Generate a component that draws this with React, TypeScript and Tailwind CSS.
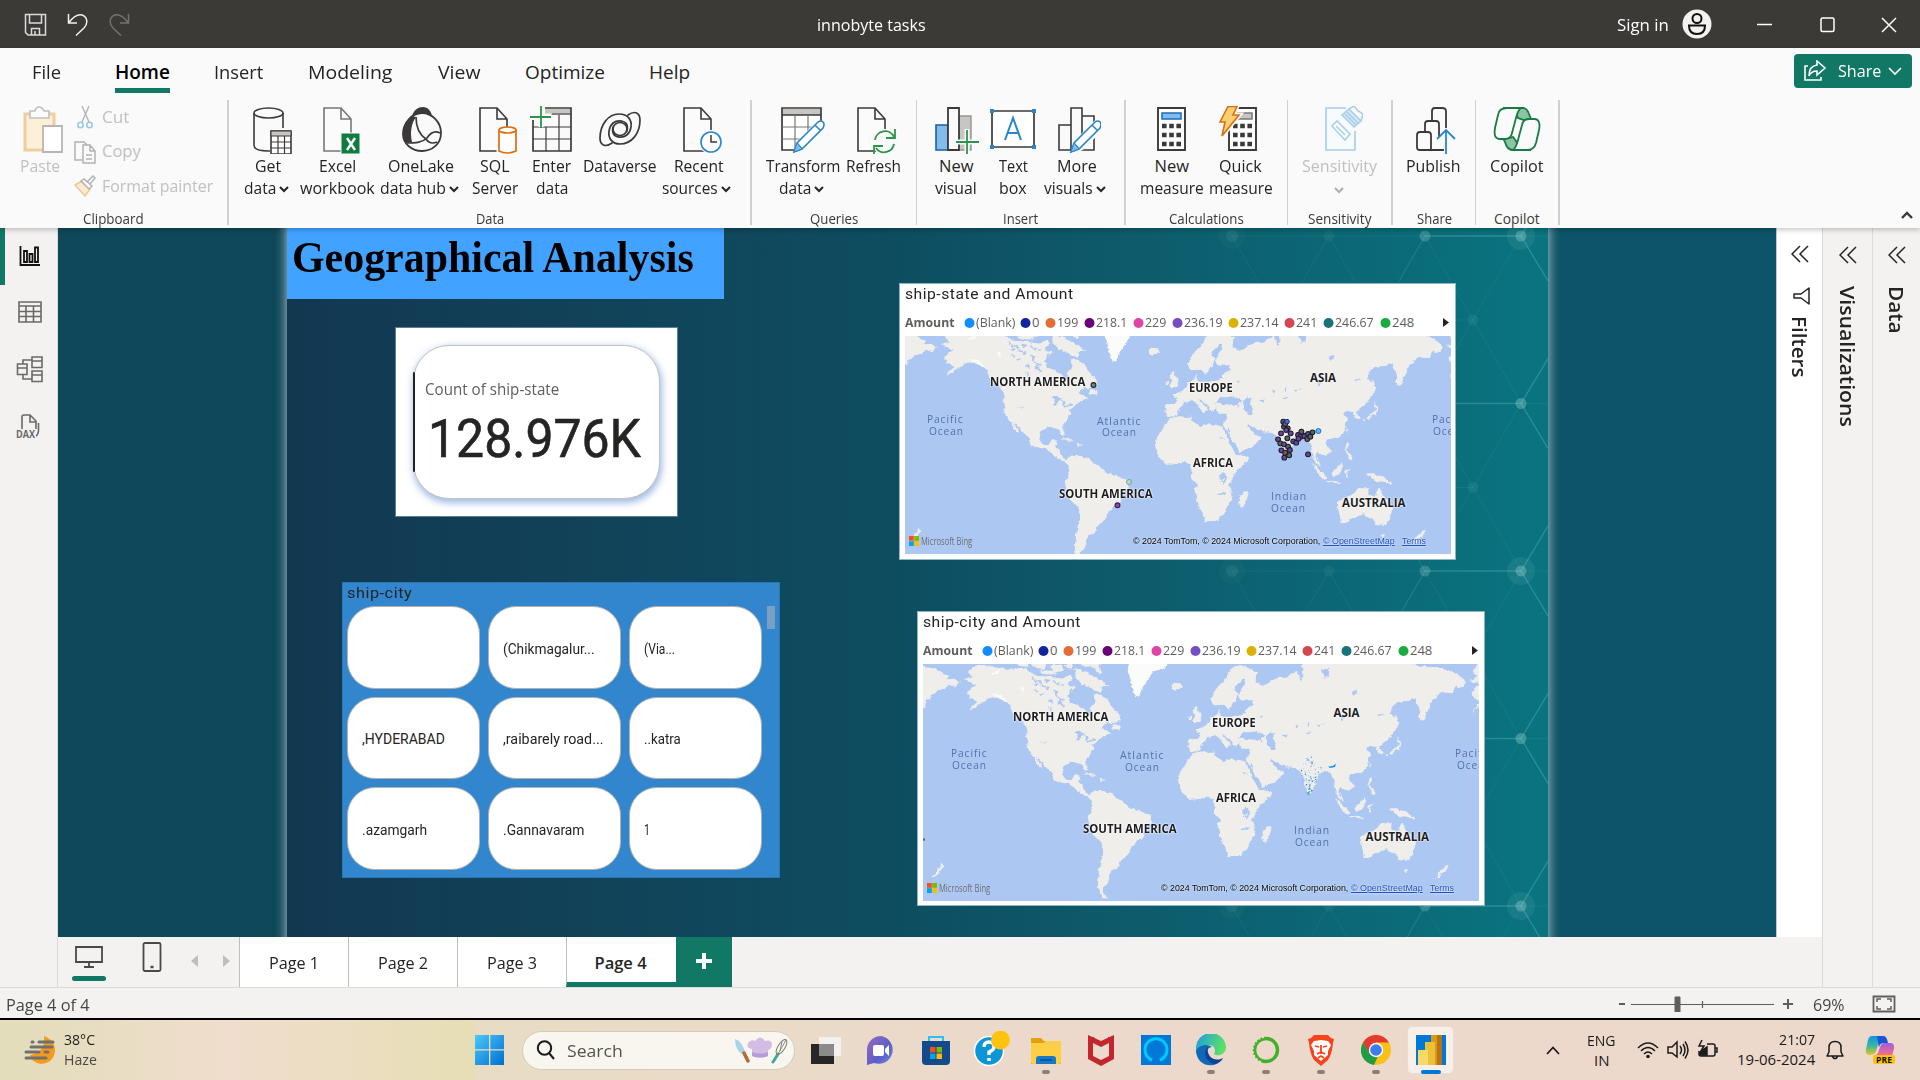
import { useLayoutEffect, useRef, useState, type ReactNode } from 'react';

/* Text squeezed or widened to an exact advance width */
function Fit({ w, children, className = '' }: { w: number; children: ReactNode; className?: string }) {
  const ref = useRef<HTMLSpanElement>(null);
  const [s, setS] = useState(1);
  useLayoutEffect(() => {
    if (ref.current) setS(w / ref.current.offsetWidth);
  }, [w]);
  return (
    <span className={`inline-block shrink-0 text-left whitespace-nowrap ${className}`} style={{ width: w }}>
      <span ref={ref} className="inline-block origin-left" style={{ transform: `scaleX(${s})` }}>
        {children}
      </span>
    </span>
  );
}

function Caret({ className = '' }: { className?: string }) {
  return (
    <svg width="10" height="8" viewBox="0 0 10 8" className={className}>
      <path d="M1 2l4 4 4-4" fill="none" stroke="currentColor" strokeWidth="2" />
    </svg>
  );
}

const K = '#3b3a39';
const Doc = ({ c = K }: { c?: string }) => (
  <path d="M1 1H18L28 12V44H1ZM18 1V12H28" fill="#fbfbfb" stroke={c} strokeWidth="1.6" />
);
const Pencil = () => (
  <g>
    <path d="M17 46L20 36 40 16 46 22 26 42Z" fill="#fafafa" stroke="#fafafa" strokeWidth="4" />
    <path d="M15 46L18 37 39 16Q42 14 44 16T44 22L23 43ZM18 37L23 43M36 19L41 24" fill="#fff" stroke="#2886ca" strokeWidth="1.6" />
    <path d="M15 46L18 37 23 43Z" fill="#83bbeb" stroke="#2886ca" />
  </g>
);

function Icon({ name }: { name: string }) {
  const p = { width: 48, height: 48, viewBox: '0 0 48 48', fill: 'none', className: 'shrink-0' };
  switch (name) {
    case 'get':
      return (
        <svg {...p} viewBox="-2 0 48 48">
          <path d="M8 7V39Q8 45 22 45H24M37 7V22" stroke={K} strokeWidth="1.6" />
          <ellipse cx="22.5" cy="7" rx="14.5" ry="5" stroke={K} strokeWidth="1.6" />
          <path d="M25 25H45V48H25Z" fill="#fff" stroke={K} strokeWidth="1.6" />
          <path d="M25 25H45V30H25Z" fill="#c8c6c4" stroke={K} strokeWidth="1" />
          <path d="M25 36H45M25 42H45M32 30V48M38.500 30V48" stroke={K} strokeWidth="1.2" />
        </svg>
      );
    case 'excel':
      return (
        <svg {...p}>
          <g transform="translate(9 1)"><Doc c="#797775" /></g>
          <path d="M27 27H46V48H27Z" fill="#107c41" stroke="#fafafa" strokeWidth="1" />
          <path d="M33 32L41 44M41 32L33 44" stroke="#fff" strokeWidth="2.4" />
        </svg>
      );
    case 'onelake':
      return (
        <svg {...p} viewBox="-1 0 48 48">
          <path d="M24 7C34 7 43 16 43 27C43 38 34 45 24 45C14 45 5 38 5 28C5 17 14 7 24 7Z" stroke={K} strokeWidth="1.8" />
          <path d="M14 10C16 4 20 1 25 1C30 1 33 5 34 10C27 6 21 7 14 10Z" fill={K} />
          <path d="M14 10C6 15 2 29 8 37L14 36C12 27 13 18 18 11Z" fill={K} />
          <path d="M18 11C18 22 22 29 28 33M8 37C17 37 24 37 29 32C33 26 38 25 42 27M28 33Q32 39 39 36" stroke={K} strokeWidth="1.7" />
        </svg>
      );
    case 'sql':
      return (
        <svg {...p}>
          <g transform="translate(8 1)"><Doc /></g>
          <path d="M28 25V46Q36 50 45 46V25" fill="#fff" stroke="#fafafa" strokeWidth="5" />
          <path d="M28 24V45Q36 49 45 45V24" fill="#fff" stroke="#da6f0e" strokeWidth="1.7" />
          <ellipse cx="36.5" cy="24" rx="8.5" ry="3" fill="#fff" stroke="#da6f0e" strokeWidth="1.7" />
        </svg>
      );
    case 'enter':
      return (
        <svg {...p}>
          <path d="M5 14V45H43V2H17" fill="none" stroke={K} strokeWidth="1.7" />
          <path d="M17 3H42V9H17Z" fill="#c8c6c4" />
          <path d="M24 8H43M5 21H43M5 33H43M18 21V45M31 9V45" stroke={K} strokeWidth="1.2" />
          <path d="M2 10H23M13 0V21" stroke="#fafafa" strokeWidth="5" />
          <path d="M2 11H23M13 0V22" stroke="#2d9549" strokeWidth="1.8" />
        </svg>
      );
    case 'dataverse':
      return (
        <svg {...p} strokeLinecap="round" stroke={K} strokeWidth="1.700">
          <path d="M32 9C39 4 44 7 44 14C44 27 36 38 24 38C16 38 12 32 13 25C14 18 19 14 25 15" />
          <path d="M16 37C9 42 4 39 4 32C4 19 12 8 23 8C32 8 36 14 35 21C34 28 29 32 23 31" />
          <ellipse cx="24" cy="23" rx="7" ry="6.500" />
          <path d="M25 15Q33 16 31 25M23 31Q15 30 17 21" />
        </svg>
      );
    case 'recent':
      return (
        <svg {...p}>
          <g transform="translate(8 1)"><Doc /></g>
          <circle cx="36" cy="36" r="12" fill="#fafafa" />
          <circle cx="36" cy="36" r="10" fill="#fff" stroke="#2886ca" strokeWidth="1.6" />
          <path d="M36 29V36H42" stroke={K} strokeWidth="1.5" />
        </svg>
      );
    case 'transform':
      return (
        <svg {...p}>
          <path d="M3 2H42V44H3Z" fill="#fff" stroke={K} strokeWidth="1.7" />
          <path d="M4 3H41V9H4Z" fill="#c8c6c4" />
          <path d="M3 9H42" stroke={K} strokeWidth="1.6" />
          <path d="M3 21H42M3 33H42M16 9V44M29 9V44" stroke="#797775" strokeWidth="1.2" />
          <path d="M43 15V46H22Z" fill="#fafafa" />
          <Pencil />
        </svg>
      );
    case 'refresh':
      return (
        <svg {...p}>
          <g transform="translate(8 1)"><Doc /></g>
          <circle cx="36" cy="36" r="13" fill="#fafafa" />
          <path d="M26 34A10 10 0 0 1 45 31M46 23V32H37M45 38A10 10 0 0 1 27 42M25 49V40H34" stroke="#2d9549" strokeWidth="1.8" />
        </svg>
      );
    case 'newvisual':
      return (
        <svg {...p} viewBox="-1 0 48 48">
          <path d="M3 19H15V44H3Z" fill="#83bbeb" stroke="#1a5fa4" strokeWidth="1.6" />
          <path d="M26 10H38V44H26Z" fill="#c8c6c4" stroke="#979593" strokeWidth="1.4" />
          <path d="M15 2H26V44H15Z" fill="#fafafa" stroke={K} strokeWidth="1.8" />
          <path d="M22 36H46M34 23V48" stroke="#fafafa" strokeWidth="5" />
          <path d="M23 36H46M34 24V48" stroke="#2d9549" strokeWidth="1.8" />
        </svg>
      );
    case 'textbox':
      return (
        <svg {...p}>
          <path d="M3 5H45V41H3Z" fill="#fff" stroke={K} strokeWidth="1.7" />
          <path d="M1 3H5V7H1ZM43 3H47V7H43ZM1 39H5V43H1ZM43 39H47V43H43Z" fill="#2886ca" />
          <path d="M16 34L24 12 32 34M19 27H29" stroke="#2886ca" strokeWidth="2" />
        </svg>
      );
    case 'morevisuals':
      return (
        <svg {...p} viewBox="-3 0 48 48">
          <path d="M3 19H15V44H3ZM26 10H38V44H26ZM15 2H26V44H15Z" fill="#fafafa" stroke={K} strokeWidth="1.6" />
          <Pencil />
        </svg>
      );
    case 'newmeasure':
    case 'quickmeasure': {
      const q = name === 'quickmeasure';
      return (
        <svg {...p} viewBox={q ? '6 0 48 48' : '0 0 48 48'}>
          <g transform={q ? 'translate(8 0)' : 'translate(0 0)'}>
            <path d="M10 2H37V44H10Z" fill="#fff" stroke={K} strokeWidth="1.9" />
            <path d="M14 7H33V13H14Z" fill={q ? '#c8c6c4' : '#83bbeb'} stroke={q ? '#797775' : '#1a6cbd'} strokeWidth="1.5" />
            <path d="M14 20H33M14 29H33M14 38H33" stroke={K} strokeWidth="4.5" strokeDasharray="4.6 2.6" />
          </g>
          {q && <path d="M17 0H26L22 9H28L11 30L14 16H9Z" fill="#fbd075" stroke="#fafafa" strokeWidth="5" />}
          {q && <path d="M17 0.500H26L22 9H28L11 30L14 16H9Z" fill="#fbd075" stroke="#da6f0e" strokeWidth="1.6" />}
        </svg>
      );
    }
    case 'sensitivity':
      return (
        <svg {...p} stroke="#a8d0ea" viewBox="-2 0 48 48">
          <path d="M29 2H9V44H38V25" fill="#f7fbfd" strokeWidth="1.7" />
          <path d="M15 20L20 15 33 28 28 34ZM19 20L28 29" fill="#fff" strokeWidth="1.6" />
          <path d="M25 9L32 3 44 15 37 21Z" fill="#d4e8f5" strokeWidth="1.6" />
          <path d="M32 3L37 0 41 5 46 8 44 15M28 8L39 19M30 6L41 17" strokeWidth="1.6" />
        </svg>
      );
    case 'publish':
      return (
        <svg {...p} viewBox="-1 0 48 48">
          <path d="M32 2H25Q22 2 22 5V16M36 22V5Q36 2 32 2M15 27V18Q15 15 18 15H26Q29 15 29 18V31M34 44H9Q7 44 7 41V29Q7 26 10 26H18Q21 26 21 29V44" stroke={K} strokeWidth="1.8" />
          <path d="M36 48V24M27 33L36 24L45 33" stroke="#2886ca" strokeWidth="1.8" />
        </svg>
      );
    case 'copilot':
      return (
        <svg {...p} stroke="#197a43" strokeWidth="1.8">
          <path d="M21 2H30Q34 2 36 8L38 13Q34 14 31 14L25 12Z" fill="#8bc5a4" />
          <path d="M27 44H20Q14 44 12 36L10 32Q16 33 20 31L23 35Z" fill="#8bc5a4" />
          <path d="M10 2H28Q25 4 23 12L19 27Q18 33 12 33H6Q0 32 2 22L5 9Q6 2 14 2Z" fill="#fafafa" />
          <path d="M38 44H20Q23 42 25 34L29 19Q30 13 36 13H42Q48 14 46 24L43 37Q41 44 34 44Z" fill="#fafafa" />
        </svg>
      );
    case 'paste':
      return (
        <svg {...p} viewBox="-1 0 48 48">
          <path d="M8 8H37V44H8Z" fill="#fdf0d9" stroke="#f0cd9f" strokeWidth="3" />
          <path d="M13 12V5H18Q19 1 22 1T27 5H32V12Z" fill="#fafafa" stroke="#c1bfbd" strokeWidth="1.6" />
          <path d="M26 20H45V46H26Z" fill="#fff" stroke="#b8b6b4" strokeWidth="1.8" />
        </svg>
      );
  }
  return null;
}

type Item = { icon: string; box: string; a: [string, number]; b?: [string, number]; caret?: boolean; off?: boolean };
type Group = { label: [string, number]; box: string; pad: string; items: Item[] };

const groups: Group[] = [
  {
    label: ['Data', 28], box: 'w-[523px] border-r-2', pad: 'pl-[7px]',
    items: [
      { icon: 'get', box: 'w-[64px]', a: ['Get', 26], b: ['data', 32], caret: true },
      { icon: 'excel', box: 'w-[75px]', a: ['Excel', 37], b: ['workbook', 75] },
      { icon: 'onelake', box: 'w-[92px]', a: ['OneLake', 66], b: ['data hub', 66], caret: true },
      { icon: 'sql', box: 'w-[56px]', a: ['SQL', 30], b: ['Server', 46] },
      { icon: 'enter', box: 'w-[57px]', a: ['Enter', 39], b: ['data', 32] },
      { icon: 'dataverse', box: 'w-[80px]', a: ['Dataverse', 74] },
      { icon: 'recent', box: 'w-[77px]', a: ['Recent', 50], b: ['sources', 56], caret: true },
    ],
  },
  {
    label: ['Queries', 48], box: 'w-[165px] border-r', pad: 'pl-[10px]',
    items: [
      { icon: 'transform', box: 'w-[82px]', a: ['Transform', 74], b: ['data', 32], caret: true },
      { icon: 'refresh', box: 'w-[58px]', a: ['Refresh', 55] },
    ],
  },
  {
    label: ['Insert', 35], box: 'w-[209px] border-r-2', pad: 'pl-[11px]',
    items: [
      { icon: 'newvisual', box: 'w-[56px]', a: ['New', 34], b: ['visual', 42] },
      { icon: 'textbox', box: 'w-[58px]', a: ['Text', 29], b: ['box', 28] },
      { icon: 'morevisuals', box: 'w-[69px]', a: ['More', 40], b: ['visuals', 49], caret: true },
    ],
  },
  {
    label: ['Calculations', 75], box: 'w-[162px] border-r', pad: 'pl-[12px]',
    items: [
      { icon: 'newmeasure', box: 'w-[67px]', a: ['New', 34], b: ['measure', 64] },
      { icon: 'quickmeasure', box: 'w-[71px]', a: ['Quick', 43], b: ['measure', 64] },
    ],
  },
  { label: ['Sensitivity', 63], box: 'w-[105px] border-r-2', pad: 'pl-[9px]', items: [{ icon: 'sensitivity', box: 'w-[84px]', a: ['Sensitivity', 75], b: ['', 0], caret: true, off: true }] },
  { label: ['Share', 35], box: 'w-[83px] border-r', pad: 'pl-[5px]', items: [{ icon: 'publish', box: 'w-[70px]', a: ['Publish', 54] }] },
  { label: ['Copilot', 46], box: 'w-[84px] border-r-2', pad: 'pl-[6px]', items: [{ icon: 'copilot', box: 'w-[70px]', a: ['Copilot', 54] }] },
];

function Ribbon() {
  return (
    <div className="flex h-[136px] pt-[8px] text-[16.5px] text-[#252423]">
      <div className="flex h-[125px] w-[229px] shrink-0 flex-col border-r-2 border-[#d0d0d0] text-[#c2c0be]">
        <div className="flex h-[109px] shrink-0 pl-[16px]">
          <div className="flex w-[48px] flex-col items-center pt-[6px]">
            <Icon name="paste" />
            <Fit w={40} className="h-[22px] leading-[24px]">Paste</Fit>
          </div>
          <div className="ml-[10px] flex flex-col">
            <div className="flex h-[34px] items-center gap-[6px]">
              <svg width="22" height="24" viewBox="0 0 22 24" fill="none"><path d="M8 1L15 17M15 1L8 17" stroke="#b8b6b4" strokeWidth="1.5" /><circle cx="6.500" cy="20" r="2.700" stroke="#9cc9e3" strokeWidth="1.600" /><circle cx="15.500" cy="20" r="2.700" stroke="#9cc9e3" strokeWidth="1.600" /></svg>
              <Fit w={27}>Cut</Fit>
            </div>
            <div className="flex h-[35px] items-center gap-[6px]">
              <svg width="22" height="24" viewBox="0 0 22 24" fill="none" stroke="#b4b2b0" strokeWidth="1.500"><path d="M8 20H1V2H10L13 5" /><path d="M9 5H16L21 11V23H9ZM16 5V11H21M12 15H18M12 19H18" /></svg>
              <Fit w={39}>Copy</Fit>
            </div>
            <div className="flex h-[34px] items-center gap-[6px]">
              <svg width="22" height="22" viewBox="0 0 22 22" fill="none"><path d="M1 10L8 6 16 14 11 21Z" fill="#fdebd0" stroke="#efc59a" strokeWidth="1.500" /><path d="M7 6L10 4 18 11 15 14ZM13 7L19 1 21 3 16 9" fill="#fff" stroke="#b4b2b0" strokeWidth="1.500" /></svg>
              <Fit w={111}>Format painter</Fit>
            </div>
          </div>
        </div>
        <div className="flex h-[16px] items-center justify-center pt-[3px] text-[13.800px] leading-[18px] text-[#3b3a39]"><Fit w={61}>Clipboard</Fit></div>
      </div>
      {groups.map((g) => (
        <div key={g.label[0]} className={`flex h-[125px] shrink-0 flex-col border-[#d0d0d0] ${g.box}`}>
          <div className={`flex h-[109px] shrink-0 ${g.pad}`}>
            {g.items.map((it) => (
              <div key={it.icon} className={`flex shrink-0 flex-col items-center pt-[6px] ${it.box} ${it.off ? 'text-[#c2c0be]' : ''}`}>
                <Icon name={it.icon} />
                <Fit w={it.a[1]} className="h-[22px] leading-[24px]">{it.a[0]}</Fit>
                {it.b && (
                  <span className={`mt-[1px] flex h-[22px] items-center justify-center gap-[3px] leading-[22px] ${it.caret && !it.off ? 'mr-[4px]' : ''}`}>
                    {it.b[0] && <Fit w={it.b[1]}>{it.b[0]}</Fit>}
                    {it.caret && <Caret className={it.off ? 'mt-[3px] text-[#b0aeac]' : 'mt-[1px]'} />}
                  </span>
                )}
              </div>
            ))}
          </div>
          <div className="flex h-[16px] items-center justify-center pt-[3px] text-[13.800px] leading-[18px] text-[#3b3a39]"><Fit w={g.label[1]}>{g.label[0]}</Fit></div>
        </div>
      ))}
      <svg width="14" height="10" viewBox="0 0 14 10" className="mt-[110px] mr-[6px] ml-auto"><path d="M2 8l5-5 5 5" fill="none" stroke="#3b3a39" strokeWidth="2.400" /></svg>
    </div>
  );
}

const land = [
  'M60 200L85 205 105 213 128 228 122 238 142 236 158 250 140 262 130 254 118 266 100 272 92 282 78 288 84 294 66 300 70 312 60 325 40 345 30 300 20 200Z',
  'M178 212L190 198 222 194 235 200 262 205 300 206 330 208 345 222 372 228 400 232 425 236 440 225 452 235 438 250 445 262 440 290 444 306 470 318 482 324 488 342 496 352 500 338 494 322 508 312 512 298 502 284 515 280 530 292 542 296 552 318 575 345 580 358 562 368 540 370 522 384 545 392 552 402 528 412 515 425 500 434 505 448 500 458 484 476 484 490 492 508 486 515 476 496 460 488 440 488 426 500 422 520 430 538 448 540 456 526 472 522 466 545 478 554 478 570 494 582 502 584 490 590 470 578 454 560 440 552 415 545 400 535 396 520 380 500 366 482 356 468 374 508 364 500 350 475 340 455 334 445 331 420 333 395 330 378 315 358 300 345 290 325 284 308 270 300 255 292 240 288 228 298 214 312 195 322 175 338 190 318 202 306 190 298 180 290 178 275 190 262 200 254 180 246 168 240 190 232Z',
  'M455 205L480 212 500 225 520 238 545 258 524 262 526 276 505 268 488 256 470 246 460 230Z',
  'M345 192L382 192 376 206 352 204ZM390 196L425 194 430 212 400 218ZM360 210L395 212 415 222 385 224ZM430 192L452 192 450 206 436 204ZM465 180L530 180 518 200 480 200ZM555 372L575 376 578 390 558 386ZM440 258L458 262 452 272ZM508 196L520 200 528 218 518 222ZM300 180L340 180 336 200 306 198Z',
  'M708 258L716 248 733 250 736 260 720 272 710 267Z',
  'M474 522L495 520 516 532 498 529ZM522 536L540 540 524 543Z',
  'M490 590L505 575 525 572 552 578 560 592 585 605 602 626 636 636 656 650 655 666 640 686 634 716 606 735 598 756 580 780 570 784 574 800 552 814 546 830 540 850 530 862 530 880 545 893 530 896 520 880 517 850 520 810 528 760 530 735 510 710 496 682 490 650 500 630 504 606Z',
  'M765 462L800 455 822 455 826 470 850 486 864 475 905 485 912 512 925 545 938 570 971 574 965 592 945 615 930 636 920 665 930 700 910 735 900 756 880 771 858 772 850 745 838 710 830 682 836 660 820 640 822 618 820 598 800 590 775 598 756 600 736 576 727 550 730 520 745 490Z',
  'M950 690L965 677 970 690 960 722 949 726 945 706Z',
  'M755 455L752 420 780 416 785 400 774 390 800 376 812 356 826 346 835 328 842 350 866 350 900 340 902 326 918 318 925 300 906 302 892 298 884 280 902 250 898 236 884 250 874 272 884 284 872 308 858 332 846 314 820 316 812 300 822 272 848 238 866 206 886 194 908 202 936 216 928 230 930 246 950 256 965 246 985 235 1015 228 1036 212 1040 225 1050 192 1060 160 1300 180 1350 196 1400 204 1440 212 1462 228 1480 244 1470 262 1450 256 1446 276 1420 275 1400 288 1386 300 1380 330 1366 364 1355 356 1358 322 1374 300 1362 288 1330 302 1305 308 1284 322 1282 344 1300 350 1302 376 1292 400 1266 426 1250 440 1264 458 1252 464 1240 440 1226 434 1214 445 1230 456 1226 478 1222 502 1205 520 1180 526 1172 536 1186 556 1176 576 1160 568 1150 558 1146 576 1158 604 1164 610 1144 592 1138 560 1134 545 1124 520 1112 510 1090 530 1084 556 1072 586 1060 566 1053 522 1040 512 1034 505 1000 497 985 490 965 474 976 496 1004 518 980 546 945 561 934 536 915 496 906 480 914 458 910 446 890 446 886 430 895 420 875 440 866 426 850 406 840 402 856 422 864 432 850 442 840 420 820 406 804 412 790 430 784 452 765 458Z',
  'M765 366L772 350 764 330 772 318 780 330 790 358 784 366ZM750 352L762 346 762 358 752 362Z',
  'M1280 456L1296 446 1304 428 1298 408 1308 420 1304 446 1286 462ZM1264 462L1274 458 1274 468Z',
  'M1136 594L1150 604 1174 636 1170 644 1154 628ZM1172 646L1214 650 1212 656 1176 652ZM1186 616L1204 606 1214 592 1218 606 1206 634 1190 630ZM1224 616L1238 610 1228 624 1232 640 1224 636ZM1278 628L1296 628 1322 634 1344 652 1342 660 1322 650 1306 648 1290 638ZM1224 532L1234 534 1230 552 1240 572 1238 588 1230 578ZM1228 488L1232 494 1228 502Z',
  'M1205 728L1204 706 1240 690 1262 670 1284 670 1284 686 1300 696 1312 668 1322 692 1345 726 1345 746 1330 780 1305 778 1294 760 1270 748 1240 765 1212 775ZM1314 808L1330 808 1322 820Z',
  'M1426 792L1434 798 1424 810 1408 834 1400 834 1414 812Z',
].join('');

const water =
  'M452 396L470 396 486 402 474 404 466 424 460 424 464 404ZM480 404L494 410 486 420ZM486 424L510 416 508 422 490 428ZM886 416L896 394 924 394 954 406 942 424 914 418ZM955 404L972 396 982 400 974 414 984 446 968 448 960 428ZM1150 360L1164 340 1166 344 1154 362ZM896 628L908 622 906 640 898 640ZM900 338L880 342 882 334ZM1040 222L1046 200 1054 204 1050 240ZM1100 210L1122 206 1120 232 1106 232ZM1180 280L1192 266 1196 282 1186 288ZM366 426L382 428 374 432ZM374 236L394 240 382 250ZM400 268L414 274 404 284ZM420 300L430 320 422 326 414 306ZM1000 404L1012 398 1010 410ZM1060 400L1074 394 1064 404ZM346 254L362 248 358 260ZM386 300L396 296 396 312ZM362 284L374 280 370 292ZM1060 374L1070 366 1068 382ZM1092 376L1114 372 1096 380ZM1246 346L1264 340 1254 348ZM1036 374L1044 378 1038 386ZM938 352L948 350 944 358Z';

const labels: [string, number, number, number, boolean][] = [
  ['NORTH AMERICA', 137.5, 52.500, 95, true],
  ['EUROPE', 311, 58.700, 44, true],
  ['ASIA', 423.500, 48.700, 26, true],
  ['AFRICA', 313, 133.500, 40, true],
  ['SOUTH AMERICA', 206.500, 164.800, 94, true],
  ['AUSTRALIA', 474, 173, 63, true],
  ['Pacific', 46, 89.500, 37, false],
  ['Ocean', 46.500, 101.500, 35, false],
  ['Atlantic', 219, 91.500, 44, false],
  ['Ocean', 219.500, 103, 35, false],
  ['Indian', 389, 166.500, 36, false],
  ['Ocean', 389, 178.500, 35, false],
  ['Pacific', 550.500, 89.500, 37, false],
  ['Ocean', 551, 101.500, 35, false],
];

/* World drawing: one map pixel is 2.613 x 3 units of the view box */
function World() {
  return (
    <div className="relative h-[250px] w-[570px]">
      <svg width="570" height="250" viewBox="60 192 1489.410 750" preserveAspectRatio="none" className="block">
        <defs>
          <filter id="coast" x="0" y="0" width="1" height="1">
            <feTurbulence type="fractalNoise" baseFrequency="0.16" numOctaves="3" seed="4" />
            <feDisplacementMap in="SourceGraphic" scale="9" xChannelSelector="R" yChannelSelector="G" />
          </filter>
          <filter id="coastSoft" x="0" y="0" width="1" height="1">
            <feTurbulence type="fractalNoise" baseFrequency="0.06" numOctaves="3" seed="9" />
            <feDisplacementMap in="SourceGraphic" scale="14" xChannelSelector="R" yChannelSelector="G" />
          </filter>
        </defs>
        <rect x="60" y="192" width="1490" height="750" fill="#abc7f2" />
        <g filter="url(#coastSoft)">
          <path d={land} fill="#efeeea" />
          <path d={land} fill="#efeeea" transform="translate(1318 0)" />
          <path d="M1426 792L1434 798 1424 810 1408 834 1400 834 1414 812Z" fill="#efeeea" transform="translate(-1318 0)" />
          <path d={water} fill="#abc7f2" />
        </g>
        <g filter="url(#coast)">
          <path d="M598 180L706 180 690 206 662 214 650 236 632 265 625 291 612 285 605 260 602 235 595 215Z" fill="#fbfbfa" />
          <path d="M236 222L262 206 256 222ZM238 282L262 284 285 308 264 298ZM314 262L322 258 324 284Z" fill="#fbfbfa" />
          <path d="M345 230L352 244 366 242 372 258 388 262 384 272M400 242L412 252 428 256M406 284L416 296 430 300M350 268L360 276M388 320L396 332M902 620L912 640 906 655 898 640M888 690L912 684M918 490L922 506M905 520H895" fill="none" stroke="#abc7f2" strokeWidth="4" />
        </g>
      </svg>
      {labels.map(([t, x, y, w, big], i) => (
        <div key={i} className="absolute flex h-0 w-0 items-center justify-center" style={{ left: x, top: y }}>
          <Fit w={w} className={big ? "font-['Open_Sans'] text-[11.500px] font-bold text-[#1d1d1f] [text-shadow:0_0_2px_#fff,0_0_2px_#fff]" : "text-[11px] font-medium tracking-[1px] text-[#5571ab]"}>
            {t}
          </Fit>
        </div>
      ))}
    </div>
  );
}

const legend: [string, string, number, number][] = [
  ['(Blank)', '#118dff', 39, 0], ['0', '#12239e', 7, 5], ['199', '#e66c37', 21, 6], ['218.1', '#6b007b', 31, 6], ['229', '#e044a7', 21, 6],
  ['236.19', '#744ec2', 39, 6], ['237.14', '#d9b300', 39, 5], ['241', '#d64550', 21, 5], ['246.67', '#197278', 39, 6], ['248', '#1aab40', 22, 6],
];

function MapVisual({ title, titleW, box, map, offset, foot, children }: { title: string; titleW: number; box: string; map: string; offset: string; foot: string; children?: ReactNode }) {
  return (
    <div className={`absolute flex flex-col border border-[#8fb6c0] bg-white px-[5px] ${box}`}>
      <div className="flex h-[20px] items-center pt-[1px] font-['Roboto'] text-[15px] text-[#252423]"><Fit w={titleW} className="tracking-[0.5px]">{title}</Fit></div>
      <div className="flex h-[32px] items-center pt-[5px] text-[13px] text-[#605e5c]">
        <Fit w={50} className="mr-[9px] font-bold">Amount</Fit>
        {legend.map(([t, c, w, gap], i) => (
          <span key={t} className="flex items-center" style={{ marginLeft: i ? gap : 0 }}>
            <svg width="12" height="12" viewBox="0 0 12 12"><circle cx="5.500" cy="6" r="5" fill={c} /></svg>
            <Fit w={w}>{t}</Fit>
          </span>
        ))}
        <svg width="6" height="9" viewBox="0 0 6 9" className="mr-[1px] ml-auto"><path d="M0 0L6 4.500L0 9Z" fill="#252423" /></svg>
      </div>
      <div className={`relative overflow-hidden ${map}`}>
        <div className={offset}><World /></div>
        {children}
        <div className={`absolute left-[4px] flex items-center gap-[2px] text-[10px] text-[#6e6f73] ${foot}`}>
          <svg width="10" height="10" viewBox="0 0 10 10"><path d="M0 0H4.800V4.800H0Z" fill="#f25022" /><path d="M5.200 0H10V4.800H5.200Z" fill="#7fba00" /><path d="M0 5.200H4.800V10H0Z" fill="#00a4ef" /><path d="M5.200 5.200H10V10H5.200Z" fill="#ffb900" /></svg>
          <Fit w={51}>Microsoft Bing</Fit>
        </div>
        <div className={`absolute right-[25px] flex items-center font-['Liberation_Sans'] text-[9.500px] text-black [text-shadow:0_0_2px_#fff] ${foot}`}>
          <Fit w={187}>© 2024 TomTom, © 2024 Microsoft Corporation,</Fit>
          <Fit w={72} className="ml-[3px] text-[#2350c0] [&>span]:underline">© OpenStreetMap</Fit>
          <Fit w={24} className="ml-[7px] text-[#2350c0] [&>span]:underline">Terms</Fit>
        </div>
      </div>
    </div>
  );
}

const stateDots: [number, number][] = [
  [1063, 455], [1065, 470], [1075, 475], [1083, 490], [1057, 490], [1074, 505], [1049, 508], [1055, 520], [1065, 523], [1076, 530], [1081, 540], [1058, 541],
  [1068, 548], [1079, 556], [1066, 563], [1071, 480], [1103, 495], [1112, 485], [1110, 500], [1120, 498], [1130, 492], [1142, 487], [1128, 507], [1090, 514],
  [1098, 518], [1136, 500], [1130, 553], [1068, 462], [1104, 506],
];
const cityDots = Array.from({ length: 130 }, (_, i) => {
  const r = (n: number) => { const v = Math.sin(i * 12.9898 + n * 78.233) * 43758.5453; return v - Math.floor(v); };
  const y = 93 + r(1) * 38;
  const half = y < 102 ? 3 + (y - 93) * 0.4 : y < 110 ? 11 : 11 - (y - 110) * 0.45;
  return [386 + (y > 102 && y < 110 ? 3 : 0) + (r(2) - 0.5) * 2 * half, y, r(3)] as const;
});

function Network() {
  const ys = [8, 175.5, 343, 510.500, 678];
  return (
    <svg width="1261" height="709" viewBox="0 0 1261 709" className="absolute inset-0" fill="none" stroke="#8fd5d8">
      {ys.map((y, i) => (
        <g key={y}>
          <path d={`M1138 ${y}H1234`} strokeOpacity=".26" strokeWidth="1.300" />
          <path d={`M1234 ${y}L1261 ${y + 45}M1234 ${y}L1261 ${y - 45}`} strokeOpacity=".28" strokeWidth="1.300" />
          <path d={`M1138 ${y}L1186 ${y + 84}L1234 ${y}M1138 ${y}L1186 ${y - 84}L1234 ${y}M945 ${y}H1138M1042 ${y}L1090 ${y + 84}L1138 ${y}M945 ${y}L993 ${y + 84}L1042 ${y}M1138 ${y + 84}H1186M1234 ${y}H1261`} strokeOpacity=".08" />
          <path d={`M1138 ${y}L1112 ${y - 45}M1138 ${y}L1112 ${y + 45}`} strokeOpacity=".14" />
          <g stroke="none" fill="#9bd3d7">
            <circle cx="1234" cy={y} r="5.500" fillOpacity=".35" />
            {i % 2 === 0 && <circle cx="1234" cy={y} r="14" fillOpacity=".1" />}
            <circle cx="1138" cy={y} r="5.500" fillOpacity=".26" />
            <circle cx="1042" cy={y} r="5.500" fillOpacity=".07" />
            <circle cx="945" cy={y} r="6" fillOpacity=".1" />
            {i % 2 === 0 && <circle cx="945" cy={y} r="13" fillOpacity=".04" />}
            <circle cx="1186" cy={y + 84} r="5.500" fillOpacity=".09" />
          </g>
        </g>
      ))}
    </svg>
  );
}

const cities: [string, number][] = [['', 0], ['(Chikmagalur...', 92], ['(Via...', 31], [',HYDERABAD', 83], [',raibarely road...', 100], ['..katra', 37], ['.azamgarh', 65], ['.Gannavaram', 81], ['1', 6]];

function Canvas() {
  return (
    <div className="relative h-[709px] w-[1718px] shrink-0 overflow-hidden bg-linear-to-r from-[#0f485b] from-15% to-[#0d5469] to-85%">
      <div className="absolute top-[-20px] left-[229px] h-[749px] w-[1261px] shadow-[0_0_10px_1px_rgba(215,225,230,0.75)]" />
      <div className="absolute top-0 left-[229px] h-[709px] w-[1261px] bg-linear-to-r from-[#123850] via-[#0e4d61] via-48% to-[#09747f]">
        <Network />
        <div className="absolute top-0 left-0 flex h-[71px] w-[437px] bg-[#41a2ff] pl-[5px] font-['Liberation_Serif'] text-[44px] leading-[60px] font-bold text-black">
          <Fit w={402}>Geographical Analysis</Fit>
        </div>
        <div className="absolute top-[99px] left-[108px] flex h-[190px] w-[283px] border border-[#5a7f92] bg-white p-[17px]">
          <div className="relative flex w-[248px] flex-col justify-center rounded-[36px] border border-[#c4c2c4] bg-white pl-[11px] shadow-[1px_3px_7px_1px_rgba(70,120,200,0.5)]">
            <div className="absolute top-[26px] bottom-[26px] -left-px w-[2px] rounded-full bg-[#222]" />
            <Fit w={134} className="mt-[2px] h-[24px] text-[15.500px] leading-[24px] text-[#605e5c]">Count of ship-state</Fit>
            <Fit w={213} className="mt-[6px] ml-[3px] h-[62px] font-['Roboto'] text-[53px] leading-[64px] text-[#252423] [-webkit-text-stroke:0.6px_#252423]">128.976K</Fit>
          </div>
        </div>
        <div className="absolute top-[354px] left-[55px] flex h-[296px] w-[438px] flex-col border border-[#2a76b4] bg-[#3286cd] pl-[4px] font-['Roboto']">
          <div className="flex h-[23px] items-center pb-[3px] text-[15px] text-[#252423]"><Fit w={65} className="tracking-[0.5px]">ship-city</Fit></div>
          <div className="flex">
            <div className="grid w-[415px] grid-cols-3 gap-x-[8px] gap-y-[8px]">
              {cities.map(([t, w], i) => (
                <div key={i} className="flex h-[82.500px] items-center rounded-[28px] border border-[#b3b0ad] bg-white pt-[4px] pl-[14px] text-[14px] text-[#252423]">
                  {t && <Fit w={w}>{t}</Fit>}
                </div>
              ))}
            </div>
            <div className="ml-[5px] h-[23px] w-[8px] bg-[#799fc3]" />
          </div>
        </div>
        <MapVisual title="ship-state and Amount" titleW={169} box="top-[55px] left-[612px] h-[277px] w-[557px]" map="h-[218px] w-[546px]" offset="-mt-[6.700px] -ml-[5.500px]" foot="bottom-[5px] h-[16px]">
          <svg width="546" height="218" viewBox="0 0 546 218" className="absolute inset-0">
            <circle cx="188.500" cy="49" r="2.400" fill="#6f8a84" stroke="#222" strokeWidth="1.100" />
            <circle cx="224" cy="146" r="2.500" fill="#b5ddc8" stroke="#7aa795" />
            <circle cx="212.500" cy="169.300" r="2.400" fill="#8a4bb0" stroke="#3c1a55" strokeWidth="1.100" />
            {stateDots.map(([x, y], i) => (
              <circle key={i} cx={x / 2.703 - 15} cy={y / 3 - 66} r="2.400" fill={i % 4 === 1 ? '#4d6a5c' : i % 5 === 2 ? '#7a6048' : '#6547a0'} stroke="#1c1c2a" strokeWidth="1.100" />
            ))}
            <circle cx={1073 / 2.703 - 15} cy={455 / 3 - 66} r="2.300" fill="#3c6fe0" stroke="#1b2c70" />
            <circle cx={1158 / 2.703 - 15} cy={483 / 3 - 66} r="2.500" fill="#62b4ff" stroke="#1b6fd0" />
          </svg>
        </MapVisual>
        <MapVisual title="ship-city and Amount" titleW={158} box="top-[383px] left-[630px] h-[295px] w-[568px]" map="h-[237px] w-[556px]" offset="" foot="bottom-[5px] h-[16px]">
          <svg width="556" height="237" viewBox="0 0 556 237" className="absolute inset-0">
            {cityDots.map(([x, y, r], i) => (
              <circle key={i} cx={x} cy={y} r={r > 0.8 ? 0.7 : 0.38} fill={r > 0.85 ? '#2e7cc0' : '#4ba6f5'} />
            ))}
            <path d="M405 102.500Q410 103 413 99.500L412 103 407 104Z" fill="#118dff" />
            <path d="M0 176L1.500 173.500V177Z" fill="#222" />
          </svg>
        </MapVisual>
      </div>
    </div>
  );
}

const Chevs = () => (
  <svg width="18" height="18" viewBox="0 0 18 18" fill="none" stroke="#252423" strokeWidth="1.500" className="shrink-0"><path d="M9 1L1 9L9 17M17 1L9 9L17 17" /></svg>
);

function VText({ h, children }: { h: number; children: ReactNode }) {
  const ref = useRef<HTMLSpanElement>(null);
  const [s, setS] = useState(1);
  useLayoutEffect(() => {
    if (ref.current) setS(h / ref.current.offsetHeight);
  }, [h]);
  return (
    <span ref={ref} className="inline-block origin-top text-[19px] leading-[24px] font-semibold whitespace-nowrap text-[#252423]" style={{ transform: `scaleY(${s})` }}>
      {children}
    </span>
  );
}

function SidePanel({ name, w, box, filter }: { name: string; w: number; box: string; filter?: boolean }) {
  return (
    <div className={`flex shrink-0 flex-col items-center ${box}`}>
      <Chevs />
      {filter && (
        <svg width="17" height="18" viewBox="0 0 17 18" className="mt-[24px] ml-[4px] shrink-0"><path d="M16 1V17L8 11H1V7H8Z" fill="none" stroke="#252423" strokeWidth="1.500" strokeLinejoin="round" /></svg>
      )}
      <div className={`mr-[2px] flex w-[24px] [writing-mode:vertical-rl] ${filter ? 'mt-[11px]' : 'mt-[22px]'}`}>
        <VText h={w}>{name}</VText>
      </div>
    </div>
  );
}

const navIcon = { width: 28, height: 28, viewBox: '0 0 28 28', fill: 'none', stroke: '#6b6967', strokeWidth: 1.6 };

function Sidebar() {
  return (
    <div className="flex w-[58px] shrink-0 border-r border-[#dddbd9] bg-[#f3f2f1]">
      <div className="h-[57px] w-[5px] bg-[#117865]" />
      <div className="flex flex-col items-center pt-[13px] pl-[11px]">
        <svg {...navIcon} stroke="#111" strokeWidth={1.8}><path d="M4.500 5V24H24M8 10H11V21H8ZM13.500 13H16.500V21H13.500ZM19 6.500H22V21H19Z" /></svg>
        <svg {...navIcon} className="mt-[29px]"><path d="M3 4H25V24H3ZM3 8H25M3 13.500H25M3 18.500H25M10 8V24M17.500 8V24" /></svg>
        <svg {...navIcon} className="mt-[29px]"><path d="M1.500 9H11V19.500H1.500ZM1.500 13H11M16 2H26V12.500H16ZM16 6H26M16 16H26V26.500H16ZM16 20H26M7 9V5H16M7 19.500V24H16" /></svg>
        <svg {...navIcon} className="mt-[30px]"><path d="M6 16V4Q6 2 8 2H14L20 8V16M14 2V9H20M22.500 10V18Q22 22 20 23" /><text x="0" y="25" fontSize="10" fontWeight="bold" fontFamily="Open Sans" fill="#6b6967" stroke="none" textLength="19" lengthAdjust="spacingAndGlyphs">DAX</text></svg>
      </div>
    </div>
  );
}

function TitleBar() {
  return (
    <header className="flex h-[48px] items-center bg-[#3b3a37] pt-[2px] text-[16.500px] text-white">
      <svg width="108" height="24" viewBox="0 0 108 24" fill="none" className="ml-[24px]" stroke="#f3f2f1" strokeWidth="1.500">
        <path d="M1.500 1.500H21.500V22H4L1.500 19.500ZM5.500 1.500V10H17.500V1.500M7.500 22V15.500H15.500V22M11 18V22" stroke="#dcdbda" />
        <path d="M44.500 1V10H53M45 9.500C50 3 54 1 58 2C64 4 64 11 60 15L52 22.500" />
        <path d="M104.500 1V10H96M104 9.500C99 3 95 1 91 2C85 4 85 11 89 15L97 22.500" stroke="#75736f" />
      </svg>
      <Fit w={109} className="ml-[685px]">innobyte tasks</Fit>
      <Fit w={52} className="ml-[691px]">Sign in</Fit>
      <svg width="30" height="30" viewBox="0 0 30 30" className="mb-[2px] ml-[13px]"><circle cx="15" cy="15" r="14.500" fill="#f3f2f1" /><g fill="none" stroke="#111" strokeWidth="2"><circle cx="15" cy="9.500" r="4.500" /><path d="M7 16.500H23Q23 25 15 25T7 16.500Z" /></g></svg>
      <svg width="142" height="16" viewBox="0 0 142 16" className="ml-[45px]" fill="none" stroke="#fff" strokeWidth="1.500"><path d="M0 7.500H15M125 1L139 15M139 1L125 15" /><rect x="64" y="1" width="13" height="13.500" rx="1.500" /></svg>
    </header>
  );
}

const tabs: [string, number, string][] = [['File', 29, ''], ['Home', 55, 'ml-[54px]'], ['Insert', 49, 'ml-[44px]'], ['Modeling', 84, 'ml-[45px]'], ['View', 43, 'ml-[46px]'], ['Optimize', 80, 'ml-[44px]'], ['Help', 41, 'ml-[44px]']];

function MenuTabs() {
  return (
    <nav className="flex h-[44px] pl-[32px] text-[19px] text-[#252423]">
      {tabs.map(([t, w, ml]) => (
        <div key={t} className={`flex h-[45px] flex-col ${ml}`}>
          <Fit w={w} className={`h-[40px] pt-[1px] leading-[46px] ${t === 'Home' ? 'font-semibold text-black' : ''}`}>{t}</Fit>
          {t === 'Home' && <div className="h-[5px] shrink-0 bg-[#117865]" />}
        </div>
      ))}
      <button className="mt-[6px] mr-[8px] ml-auto flex h-[34px] w-[118px] items-center rounded-[4px] bg-[#117865] pl-[9px] text-[16.500px] text-white">
        <svg width="24" height="22" viewBox="0 0 24 22" fill="none" stroke="#fff" strokeWidth="1.600"><path d="M5 6H2V20H18V17M14 1L22 8L14 15V11Q8 11 6 16Q6 6 14 5Z" /></svg>
        <Fit w={43} className="ml-[11px] pt-[1px]">Share</Fit>
        <svg width="14" height="10" viewBox="0 0 14 10" className="ml-[7px]"><path d="M1 2l6 6 6-6" fill="none" stroke="#fff" strokeWidth="1.600" /></svg>
      </button>
    </nav>
  );
}

function PageTabs() {
  return (
    <div className="flex h-[50px] text-[16.500px] text-[#252423]">
      <div className="flex w-[181px] shrink-0">
        <div className="ml-[14px] flex w-[34px] flex-col items-center pt-[9px]">
          <svg width="28" height="22" viewBox="0 0 28 22" fill="none" stroke="#4b4947" strokeWidth="1.800"><path d="M1 1H27V16H1ZM14 16V21M9 21H19" /></svg>
          <div className="mt-[8px] h-[5px] w-[34px] rounded-full bg-[#117865]" />
        </div>
        <svg width="20" height="30" viewBox="0 0 20 30" className="mt-[5px] ml-[36px]" fill="none" stroke="#4b4947" strokeWidth="1.800"><rect x="1.500" y="1" width="17" height="28" rx="1.500" /><path d="M8.500 25H11.500" strokeWidth="2.500" /></svg>
        <svg width="40" height="12" viewBox="0 0 40 12" className="mt-[18px] ml-[29px]" fill="#c0bebc"><path d="M7 0V12L0 6ZM32 0V12L39 6Z" /></svg>
      </div>
      {['Page 1', 'Page 2', 'Page 3', 'Page 4'].map((p, i) => (
        <div key={p} className={`flex h-[50px] shrink-0 items-center justify-center border-l bg-white pt-[2px] ${i === 3 ? 'w-[110px] border-b-[5px] border-b-[#117865] border-l-[#c0bebc] pt-[7px] pr-[2px] font-semibold' : 'w-[109px] border-[#c0bebc] pr-[1px]'}`}>
          <Fit w={i === 3 ? 52 : 50}>{p}</Fit>
        </div>
      ))}
      <div className="flex w-[56px] items-center justify-center bg-[#117865] pb-[2px]">
        <svg width="16" height="16" viewBox="0 0 16 16"><path d="M8 0V16M0 8H16" stroke="#fff" strokeWidth="4" /></svg>
      </div>
    </div>
  );
}

function StatusBar() {
  return (
    <div className="flex h-[33px] items-center border-t border-b-2 border-t-[#dddbd9] border-b-black bg-[#f3f2f1] pt-[4px] text-[16.500px] text-[#484644]">
      <Fit w={84} className="ml-[6px]">Page 4 of 4</Fit>
      <svg width="175" height="16" viewBox="0 0 175 16" className="mr-[20px] mb-[2px] ml-auto" stroke="#605e5c"><path d="M1 8H7M165 8H175M170 3V13" strokeWidth="2" /><path d="M13 8.500H156M84.500 5V12" strokeWidth="1.200" /><path d="M57 1H62V16H57Z" fill="#605e5c" /></svg>
      <Fit w={32} className="mr-[27px]">69%</Fit>
      <svg width="24" height="18" viewBox="0 0 24 18" className="mr-[24px] mb-[2px]" fill="none" stroke="#605e5c"><path d="M1.500 1.500H22.500V16.500H1.500Z" strokeWidth="1.800" /><path d="M5 7V4H9M15 4H19V7M19 11V14H15M9 14H5V11" strokeWidth="1.500" /></svg>
    </div>
  );
}

const A = { width: 30, height: 32, viewBox: '0 0 30 32', fill: 'none' };
const apps: { icon: ReactNode; run?: boolean; active?: boolean }[] = [
  { icon: <svg {...A}><path d="M0 10H23V30H0Z" fill="#262626" /><path d="M8 3H30V22H8Z" fill="#f4f4f2" fillOpacity=".88" /><path d="M8 10H23V22H8Z" fill="#8b8b8b" /></svg> },
  { icon: <svg {...A}><defs><linearGradient id="ch" x1="0" y1="0" x2="1" y2="1"><stop stopColor="#9a6ac0" /><stop offset=".6" stopColor="#5b5fc7" /><stop offset="1" stopColor="#6a8be0" /></linearGradient></defs><path d="M15 2A14 14 0 1 1 8 29L1 31V16A14 14 0 0 1 15 2Z" fill="url(#ch)" /><rect x="7" y="11" width="11" height="11" rx="2" fill="#fff" /><path d="M19 15L23 11V22L19 18Z" fill="#fff" /></svg> },
  { icon: <svg {...A}><path d="M8 8V3H22V8" stroke="#2cc0f5" strokeWidth="2" /><path d="M1 7H29V27Q29 31 25 31H5Q1 31 1 27Z" fill="#134a8c" /><path d="M9 13H14.500V18.500H9Z" fill="#f25022" /><path d="M15.500 13H21V18.500H15.500Z" fill="#7fba00" /><path d="M9 19.500H14.500V25H9Z" fill="#00a4ef" /><path d="M15.500 19.500H21V25H15.500Z" fill="#ffb900" /></svg> },
  { icon: <svg {...A} width={38} height={38} viewBox="-7 -4 38 38"><circle cx="10" cy="16" r="14.500" fill="#0d96d6" stroke="#fff" strokeWidth="1.500" /><path d="M5 12Q5 7 10 7T15 12Q15 15 10 17V20M10 23V26" stroke="#fff" strokeWidth="3.400" /><circle cx="21.500" cy="5" r="9.400" fill="#ffc20e" /></svg> },
  { icon: <svg {...A}><path d="M0 4H10L13 7H30V30H0Z" fill="#e3a008" /><path d="M0 9H12L15 7H30V28Q30 30 28 30H2Q0 30 0 28Z" fill="#fdcf45" /><path d="M5 30V25Q5 22 8 22H22Q25 22 25 25V30Z" fill="#1979c9" /><path d="M9 26H21" stroke="#0b4d8a" strokeWidth="1.500" /></svg>, run: true },
  { icon: <svg {...A}><path d="M2 1L15 7L28 1V25L15 32L2 25Z" fill="#c1272d" /><path d="M7 9L15 13L23 9V22L15 26L7 22Z" fill="#eed9cf" /><path d="M7 9V3M23 9V3" stroke="#c1272d" strokeWidth="2" /></svg> },
  { icon: <svg {...A}><path d="M0 1H30V31H0Z" fill="#0078d7" /><path d="M11 26A11 11 0 1 1 19 26" stroke="#00caff" strokeWidth="3" /></svg> },
  { icon: <svg {...A}><defs><linearGradient id="ed" x1="0" y1="0" x2="1" y2=".3"><stop stopColor="#1b9de2" /><stop offset="1" stopColor="#5be06a" /></linearGradient></defs><path d="M0 15A15 15 0 0 1 30 13C30 21 21 23 18 20C20 17 19 11 13 11C7 11 1 15 0 20Z" fill="url(#ed)" /><path d="M0 17C2 11 12 9 16 13C10 14 8 21 13 26C17 29 23 28 27 24C20 36 1 33 0 17Z" fill="#1068b8" /><path d="M12 13C6 18 10 29 19 30Q25 28 27 24C20 28 10 24 12 13Z" fill="#0c4594" /></svg>, run: true },
  { icon: <svg {...A}><circle cx="15" cy="16" r="11.500" stroke="#43b02a" strokeWidth="3.500" /><path d="M13 3A13 13 0 0 0 10 28" stroke="#eed9cf" strokeWidth="2" strokeDasharray="2 2" /></svg>, run: true },
  { icon: <svg {...A}><path d="M8 1H22L25 4L28 5L27 9Q26 20 22 26L15 32L8 26Q4 20 3 9L2 5L5 4Z" fill="#f5431b" /><path d="M8 7L15 6L22 7L25 11L22 17V21L15 27L8 21V17L5 11Z" fill="#fff" /><path d="M9 12L13 13M21 12L17 13M15 11V20M11 20L15 18L19 20M12 24L15 22L18 24" stroke="#f5431b" strokeWidth="1.800" /></svg>, run: true },
  { icon: <svg {...A}><circle cx="15" cy="16" r="15" fill="#fbc116" /><path d="M2 8.500A15 15 0 0 1 28 8.500H15L8 19Z" fill="#e33b2e" /><path d="M2 8.500L9 20Q12 23 17 22L13 31A15 15 0 0 1 2 8.500Z" fill="#209b48" /><circle cx="15" cy="16" r="7.200" fill="#fff" /><circle cx="15" cy="16" r="5.800" fill="#3b7ded" /></svg>, run: true },
  { icon: <svg {...A}><path d="M0 1H30V31H0Z" fill="#0078d7" /><path d="M15 1H26V31H15Z" fill="#d99a1a" /><path d="M21 1H26V31H21Z" fill="#b87410" /><path d="M9 8H19V31H9Z" fill="#ecc038" /><path d="M2 16H12V31H2Z" fill="#f7d968" /></svg>, active: true },
];

function Taskbar() {
  return (
    <footer className="flex h-[60px] items-center bg-linear-to-r from-[#e4dfbd] via-[#ecd9cc] via-55% to-[#ecd9cc] text-[15px] text-[#1b1b1b]">
      <div className="flex h-full w-[475px] shrink-0 items-center bg-linear-to-r from-[#e2ddba] via-[#f0ddcd] via-48% to-[#e6deb4] pl-[24px]">
        <svg width="32" height="30" viewBox="0 0 32 30"><path d="M20 1Q32 6 31 17Q29 28 17 29Q8 28 6 20Q22 17 20 1Z" fill="#f59a1c" /><path d="M8 7H9M15 7H29M7 12H28M2 17H15M21 17H24M2 23H22" stroke="#71706f" strokeWidth="3" strokeLinecap="round" /></svg>
        <div className="mb-[2px] ml-[8px] flex flex-col leading-[20px]">
          <Fit w={31}>38°C</Fit>
          <Fit w={33} className="text-[#4b4946]">Haze</Fit>
        </div>
      </div>
      <svg width="30" height="30" viewBox="0 0 30 30"><defs><linearGradient id="win" x1="0" y1="0" x2="1" y2="1"><stop stopColor="#4cc8fa" /><stop offset="1" stopColor="#006fd0" /></linearGradient></defs><path d="M0 0H14V14.300H0ZM15.300 0H29V14.300H15.300ZM0 15.500H14V30H0ZM15.300 15.500H29V30H15.300Z" fill="url(#win)" /></svg>
      <div className="ml-[17px] flex h-[39px] w-[273px] shrink-0 items-center rounded-full border border-[#d2ccb8] bg-[#f8f6ee] pl-[13px] text-[17px] text-[#55534f]">
        <svg width="20" height="20" viewBox="0 0 20 20" fill="none" stroke="#1b1b1b" strokeWidth="2"><circle cx="8.500" cy="8" r="6.700" /><path d="M13 13L18 19" /></svg>
        <Fit w={56} className="ml-[11px] pt-[1px]">Search</Fit>
        <svg width="54" height="28" viewBox="0 0 54 28" className="ml-[111px]"><path d="M1 3Q8 5 11 16L8 18Q1 14 1 3Z" fill="#a9d4e8" /><path d="M10 17L14 25" stroke="#b06a35" strokeWidth="3.500" strokeLinecap="round" /><path d="M18 13Q12 12 14 7Q17 3 21 5Q26-2 31 5Q37 3 38 8Q38 13 34 14V20Q26 23 18 20Z" fill="#d3bde4" /><path d="M18 16Q26 19 34 16V20Q26 23 18 20Z" fill="#b79bd3" /><path d="M44 18L39 26" stroke="#43a79a" strokeWidth="3" strokeLinecap="round" /><ellipse cx="47.500" cy="11" rx="3.500" ry="8.500" transform="rotate(32 47.500 11)" fill="none" stroke="#777" /><path d="M44 18L52 4M46 15L48 5" stroke="#888" /></svg>
      </div>
      <div className="ml-[3px] flex shrink-0">
        {apps.map((a, i) => (
          <div key={i} className="relative flex h-[48px] w-[55px] items-center justify-center">
            {a.active && <div className="absolute inset-x-[4px] inset-y-0 rounded-[5px] border border-[#e8dcd4] bg-[#f8efe8]" />}
            <div className="relative">{a.icon}</div>
            {(a.run || a.active) && <div className={`absolute bottom-0 h-[4px] rounded-full ${a.active ? 'w-[20px] bg-[#0078d4]' : 'w-[8px] bg-[#8b8079]'}`} />}
          </div>
        ))}
      </div>
      <svg width="14" height="9" viewBox="0 0 14 9" className="ml-[88px]"><path d="M1 8L7 1.500L13 8" fill="none" stroke="#1b1b1b" strokeWidth="1.800" /></svg>
      <div className="mb-[1px] ml-[27px] flex flex-col items-center leading-[20px]">
        <Fit w={29}>ENG</Fit>
        <Fit w={15}>IN</Fit>
      </div>
      <svg width="82" height="22" viewBox="0 0 82 22" className="ml-[21px]" fill="none" stroke="#1b1b1b" strokeWidth="1.500"><path d="M1 9Q11-1 21 9M4 12Q11 5 18 12M7 15Q11 11 15 15" /><circle cx="11" cy="17.500" r="1.800" fill="#1b1b1b" stroke="none" /><path d="M31 8H35L40 3V18L35 14H31ZM43 7Q46 11 43 15M46 5Q50 11 46 17M48 2.500Q54 11 48 19.500" /><path d="M70 5H76Q78 5 78 7V15Q78 17 76 17H64Q62 17 62 15V12M78 9H80V13H78" /><path d="M63 16V13L70 8V16Z" fill="#1b1b1b" /><path d="M65 1L62 7H67L64 12" /></svg>
      <div className="mb-[2px] ml-[17px] flex w-[79px] flex-col items-end leading-[20px]">
        <Fit w={36}>21:07</Fit>
        <Fit w={78}>19-06-2024</Fit>
      </div>
      <svg width="18" height="20" viewBox="0 0 18 20" className="ml-[11px]" fill="none" stroke="#1b1b1b" strokeWidth="1.500"><path d="M1 16H17L15 12V7.500Q15 1.500 9 1.500T3 7.500V12ZM6.500 16Q7 18.500 9 18.500T11.500 16" strokeLinejoin="round" /></svg>
      <svg width="31" height="30" viewBox="0 0 31 30" className="ml-[21px]"><defs><linearGradient id="cp" x1="0" y1="0" x2="0" y2="1"><stop stopColor="#1593e6" /><stop offset=".5" stopColor="#35b6a5" /><stop offset="1" stopColor="#e4c61c" /></linearGradient><linearGradient id="cq" x1="0" y1="0" x2="0" y2="1"><stop stopColor="#a25be6" /><stop offset="1" stopColor="#ff6f7b" /></linearGradient></defs><path d="M7 1H18Q14 4 12 13Q11 20 5 20Q0 20 1 14L3 5Q4 1 7 1Z" fill="url(#cp)" /><path d="M12 1H19Q22 2 23 8H18Q14 9 14 13Z" fill="#1b56d4" /><path d="M19 8H26Q30 9 29 14L27 21H7Q13 21 14 15Q16 8 19 8Z" fill="url(#cq)" /><rect x="8" y="20" width="22" height="9" rx="2" fill="#fdc20f" /><text x="11" y="27.500" fontSize="8.500" fontWeight="bold" fontFamily="Open Sans" fill="#111" textLength="16">PRE</text></svg>
    </footer>
  );
}

export default function App() {
  return (
    <div className="flex h-[1080px] w-[1920px] flex-col overflow-hidden bg-[#f3f2f1] font-['Open_Sans','Noto_Sans',sans-serif]">
      <TitleBar />
      <div className="relative z-10 h-[180px] shrink-0 bg-[#fafafa] shadow-[0_2px_5px_rgba(0,0,0,0.22)]">
        <MenuTabs />
        <Ribbon />
      </div>
      <div className="flex h-[759px] shrink-0">
        <Sidebar />
        <div className="flex w-[1764px] shrink-0 flex-col">
          <div className="flex h-[709px]">
            <Canvas />
            <SidePanel name="Filters" w={62} filter box="w-[46px] border-l border-[#c8c6c4] bg-white pt-[17px]" />
          </div>
          <PageTabs />
        </div>
        <SidePanel name="Visualizations" w={141} box="w-[50px] border-l border-[#dddbd9] pt-[18px]" />
        <SidePanel name="Data" w={47} box="w-[48px] border-l border-[#dddbd9] pt-[18px]" />
      </div>
      <StatusBar />
      <Taskbar />
    </div>
  );
}
